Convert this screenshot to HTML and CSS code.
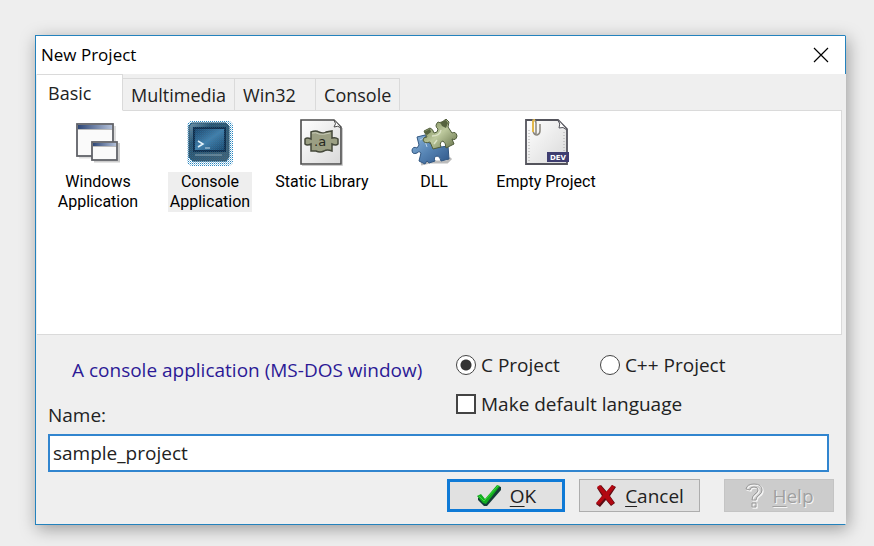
FILE: index.html
```html
<!DOCTYPE html>
<html lang="en">
<head>
    <meta charset="UTF-8">
    <meta name="viewport" content="width=device-width, initial-scale=1.0">
    <title>New Project</title>
    <link rel="stylesheet" href="styles.css">
</head>
<body>
    <form class="dialog">
        <div class="title-bar">
            <h1>New Project</h1>
            <button type="button" class="close" aria-label="Close">
                <svg width="16" height="16" viewBox="0 0 16 16"><path d="M1 1L15 15M15 1L1 15" stroke="#000" stroke-width="1.2"/></svg>
            </button>
        </div>

        <div class="tabs">
            <button type="button" class="tab active">Basic</button>
            <button type="button" class="tab">Multimedia</button>
            <button type="button" class="tab">Win32</button>
            <button type="button" class="tab">Console</button>
        </div>

        <div class="panel">
            <button type="button" class="item">
                <svg width="48" height="48" viewBox="0 0 48 48">
                    <defs>
                        <linearGradient id="bar"><stop offset="0" stop-color="#2d4677"/><stop offset="1" stop-color="#b3c0d8"/></linearGradient>
                        <linearGradient id="paper" x2="1" y2="1"><stop offset="0" stop-color="#fff"/><stop offset="1" stop-color="#d9d9d9"/></linearGradient>
                    </defs>
                    <path d="M5 38.5H41V7" fill="none" stroke="#ddd" stroke-width="2"/>
                    <rect x="3" y="5" width="36" height="32" fill="#fafafa" stroke="#606268" stroke-width="1.8"/>
                    <rect x="4" y="6" width="34" height="4" fill="url(#bar)"/>
                    <path d="M4 10.5H38" stroke="#bbb"/>
                    <path d="M20 42.5H45V24" fill="none" stroke="#ccc" stroke-width="2"/>
                    <rect x="18" y="23" width="25" height="18" fill="#fafafa" stroke="#606268" stroke-width="1.8"/>
                    <rect x="19" y="24" width="23" height="3" fill="url(#bar)"/>
                    <path d="M19 27.5H42" stroke="#bbb"/>
                </svg>
                <span>Windows Application</span>
            </button>
            <button type="button" class="item selected">
                <svg width="48" height="48" viewBox="0 0 48 48">
                    <defs>
                        <linearGradient id="chip" x2="1" y2="1"><stop offset="0" stop-color="#7895a8"/><stop offset=".3" stop-color="#2c526c"/><stop offset="1" stop-color="#456071"/></linearGradient>
                        <linearGradient id="screen" x2="1" y2="1"><stop offset="0" stop-color="#1d4367"/><stop offset=".5" stop-color="#467fa8"/><stop offset="1" stop-color="#1c4669"/></linearGradient>
                        <pattern id="dots" width="2" height="2" patternUnits="userSpaceOnUse"><rect width="1" height="1" fill="#2584bf"/><rect x="1" y="1" width="1" height="1" fill="#2584bf" opacity=".4"/></pattern>
                    </defs>
                    <rect x="1" y="2" width="46" height="45" rx="5" fill="url(#dots)"/>
                    <path d="M6 4H40L43 7V38L40 42H7L3 38V7Z" fill="url(#chip)" stroke="#34566d"/>
                    <rect x="7" y="8" width="33" height="25" fill="#122c48"/>
                    <rect x="9" y="10" width="29" height="21" fill="url(#screen)"/>
                    <rect x="2" y="3" width="43" height="41" rx="4" fill="url(#dots)" opacity=".35"/>
                    <path d="M12 22L17 25L12 28" fill="none" stroke="#e4f2fa" stroke-width="1.5"/>
                    <path d="M19 29H24" stroke="#c4d9e6"/>
                    <path d="M9 36H36" stroke="#8ba6b5"/>
                </svg>
                <span>Console Application</span>
            </button>
            <button type="button" class="item">
                <svg width="48" height="48" viewBox="0 0 48 48">
                    <path d="M4 46.5H44.5V9" fill="none" stroke="#ccc"/>
                    <path d="M3 1H36L43 8V45H3Z" fill="url(#paper)" stroke="#4c4c4c" stroke-width="1.6"/>
                    <path d="M36 1Q39 5 36 8Q40 6 43 9" fill="#fff" stroke="#4c4c4c"/>
                    <path d="M13 13Q18 11 21 13Q25 15 28 13L34 12V19Q38 18 40 20V25Q38 27 34 25V32Q29 30 26 32Q22 34 18 32H13V25Q9 27 7 25V20Q9 18 13 20Z" fill="#9b9f83" stroke="#45493b" stroke-width="1.5"/>
                    <path d="M14 14Q18 13 21 15Q25 16 32 14" fill="none" stroke="#c9ccba"/>
                    <text x="16" y="27" class="lib-mark">.a</text>
                </svg>
                <span>Static Library</span>
            </button>
            <button type="button" class="item">
                <svg width="48" height="48" viewBox="0 0 48 48">
                    <defs>
                        <linearGradient id="blue" x2="1" y2="1"><stop offset="0" stop-color="#8db6da"/><stop offset=".5" stop-color="#5583b3"/><stop offset="1" stop-color="#2f5688"/></linearGradient>
                        <linearGradient id="green" x2="1" y2="1"><stop offset="0" stop-color="#6a7948"/><stop offset=".5" stop-color="#bdc99d"/><stop offset="1" stop-color="#626e46"/></linearGradient>
                    </defs>
                    <path d="M11 45L20 43L37 43L41 39" fill="none" stroke="#bbb" stroke-width="3"/>
                    <path d="M7 18L15 16L19 24L31 28L38 27L39 40L31 42Q30 37 27 37Q23 38 25 42L19 44Q17 40 15 45L9 42L11 34Q9 31 7 34Q2 36 2 31Q3 27 7 29L9 26Z" fill="url(#blue)" stroke="#315681"/>
                    <path d="M10 21L14 19L17 28" fill="none" stroke="#b8d2e8"/>
                    <path d="M14 12L20 9Q23 10 24 14Q28 14 28 10Q24 7 28 3L31 4L36 0L39 3L38 8L42 14Q46 12 47 17Q46 22 42 20L44 25L36 29Q36 24 33 22Q29 23 31 28L23 30L20 23Q14 25 13 21Q13 18 17 18Z" fill="url(#green)" stroke="#505d3b"/>
                    <path d="M30 3L36 1L38 4L36 9L32 7ZM14 13L20 10L21 13L17 16Z" fill="#56633e"/>
                    <path d="M22 17Q30 17 31 11M24 25L27 21" fill="none" stroke="#dbe2c5" stroke-width="1.5"/>
                </svg>
                <span>DLL</span>
            </button>
            <button type="button" class="item">
                <svg width="48" height="48" viewBox="0 0 48 48">
                    <path d="M4 1H36L45 10V45H4Z" fill="url(#paper)" stroke="#54545c" stroke-width="1.8"/>
                    <path d="M36 1Q39 5 37 9Q41 7 45 11" fill="#fff" stroke="#54545c"/>
                    <path d="M7 11V44M42 13V32" stroke="#aaa" stroke-dasharray="1 2"/>
                    <path d="M14 15V4Q14 1 11 1V12Q12 16 15 16Q18 15 18 12V5" fill="none" stroke="#8a867d" stroke-width="1.5"/>
                    <path d="M11 13V3Q11 1 13 1" fill="none" stroke="#e2b84a" stroke-width="2"/>
                    <rect x="25" y="33" width="22" height="10" fill="#3e3d70"/>
                    <text x="28" y="41" class="dev-mark">DEV</text>
                </svg>
                <span>Empty Project</span>
            </button>
        </div>

        <div class="options">
            <div class="info">
                <p class="description">A console application (MS-DOS window)</p>
                <label for="projectName">Name:</label>
            </div>
            <div class="choices">
                <div class="languages">
                    <label><input type="radio" name="language" checked>C Project</label>
                    <label><input type="radio" name="language">C++ Project</label>
                </div>
                <label><input type="checkbox">Make default language</label>
            </div>
        </div>
        <div class="name-field">
            <input type="text" id="projectName" value="sample_project">
        </div>

        <div class="button-group">
            <button type="submit" class="btn ok">
                <svg width="26" height="24" viewBox="0 0 26 24">
                    <path d="M2 14L6 12L10 17L22 2L25 3V6L11 22H8L2 16Z" fill="#163c38"/>
                    <path d="M1 12L5 10L9 15L21 1L24 2L10 20L7 19Z" fill="#13ad20"/>
                    <path d="M3 12L8 17L22 2" fill="none" stroke="#3ddb3a"/>
                </svg>
                <span><u>O</u>K</span>
            </button>
            <button type="button" class="btn cancel">
                <svg width="22" height="24" viewBox="0 0 22 24">
                    <path d="M2 4L6 1L12 8L17 1L21 3L15 12L20 19L16 22L11 16L5 23L1 20L7 12Z" fill="#5c0c14"/>
                    <path d="M2 3L5 1L11 8L17 1L20 3L14 11L19 19L16 21L10 14L4 21L1 19L8 11Z" fill="#b30812"/>
                </svg>
                <span><u>C</u>ancel</span>
            </button>
            <button type="button" class="btn help" disabled>
                <svg width="20" height="28" viewBox="0 0 20 28">
                    <g fill="none" stroke-linejoin="round">
                        <path d="M3 8Q4 3 11 3Q19 3 19 9Q19 12 16 14Q13 16 13 19H9Q9 15 12 13Q15 11 15 9Q15 6 11 6Q7 6 7 9ZM9 22H13V26H9Z" stroke="#f5f5f5" stroke-width="1.5"/>
                        <path d="M2 7Q3 2 10 2Q18 2 18 8Q18 11 15 13Q12 15 12 18H8Q8 14 11 12Q14 10 14 8Q14 5 10 5Q6 5 6 8ZM8 21H12V25H8Z" stroke="#999"/>
                    </g>
                </svg>
                <span><u>H</u>elp</span>
            </button>
        </div>
    </form>
</body>
</html>
```

FILE: styles.css
```css
* {
    box-sizing: border-box;
}

body {
    margin: 0;
    padding: 35px 28px 21px 35px;
    background-color: #eee;
    font-family: "Open Sans", "Noto Sans", sans-serif;
    font-size: 19px;
    line-height: 26px;
    color: #222;
}

button, input {
    font: inherit;
    color: inherit;
}

h1, p {
    margin: 0;
}

.dialog {
    background-color: #efefef;
    border: 1px solid #2482bd;
    border-right-color: #efefef;
    box-shadow: 2px 4px 16px rgba(0, 0, 0, 0.35);
}

.title-bar {
    display: flex;
    justify-content: space-between;
    align-items: center;
    height: 38px;
    margin-right: -1px;
    padding: 0 16px 0 5px;
    background-color: #fff;
    border-right: 1px solid #2482bd;
}

.title-bar h1 {
    font-size: 17px;
    font-weight: normal;
    color: #000;
}

.close {
    display: flex;
    padding: 0;
    background: none;
    border: none;
}

/* tabs */
.tabs {
    display: flex;
    align-items: flex-end;
    padding-left: 1px;
}

.tab {
    position: relative;
    min-width: 81px;
    height: 33px;
    margin-bottom: -1px;
    padding: 0 8px;
    background-color: #f0f0f0;
    border: 1px solid #dadada;
    border-left: none;
    font-size: 18px;
    text-align: left;
}

.tab.active {
    min-width: 86px;
    height: 37px;
    padding-left: 11px;
    background-color: #fff;
    border-bottom-color: #fff;
}

.panel {
    display: flex;
    align-items: flex-start;
    height: 225px;
    margin: 0 3px 0 1px;
    padding: 8px 5px;
    background-color: #fff;
    border: 1px solid #dadada;
    border-left: none;
}

.item {
    display: flex;
    flex-direction: column;
    align-items: center;
    gap: 5px;
    width: 112px;
    padding: 0;
    background: none;
    border: none;
    font-family: Roboto, sans-serif;
    font-size: 16px;
    line-height: 20px;
    color: #000;
}

.item span {
    max-width: 84px;
}

.item:nth-child(n+3) span {
    max-width: none;
}

.item.selected span {
    background-color: #eee;
}

.lib-mark {
    font-family: "DejaVu Sans", sans-serif;
    font-size: 13px;
    fill: #262820;
}

.dev-mark {
    font-family: "DejaVu Sans", sans-serif;
    font-size: 7px;
    font-weight: bold;
    fill: #fff;
}

/* project options */
.options {
    display: grid;
    grid-template-columns: 408px 1fr;
    padding: 0 16px 0 12px;
}

.info {
    display: flex;
    flex-direction: column;
    gap: 19px;
    padding-top: 22px;
}

.description {
    padding-left: 24px;
    color: #2c1a96;
}

.choices {
    display: flex;
    flex-direction: column;
    gap: 13px;
    padding-top: 17px;
}

.languages {
    display: flex;
    gap: 40px;
}

.choices label {
    display: flex;
    align-items: center;
    gap: 5px;
}

.choices input {
    appearance: none;
    width: 20px;
    height: 20px;
    margin: 0;
    background-color: #fff;
    border: 2px solid #444;
}

.choices input[type="radio"] {
    border-width: 1px;
    border-radius: 50%;
}

.choices input[type="radio"]:checked {
    background-image: radial-gradient(circle, #333 5px, #fff 6px);
}

.choices input[type="checkbox"]:checked {
    background-color: #444;
}

.name-field {
    padding: 6px 16px 0 12px;
}

.name-field input {
    display: block;
    width: 100%;
    height: 38px;
    padding: 0 3px;
    background-color: #fff;
    border: 2px solid #3185cf;
    outline: none;
}

/* bottom buttons */
.button-group {
    display: flex;
    justify-content: flex-end;
    padding: 7px 11px 12px;
}

.btn {
    display: flex;
    justify-content: center;
    align-items: center;
    gap: 8px;
    height: 33px;
    padding: 0;
    background-color: #e1e1e1;
    border: 1px solid #adadad;
}

.btn u {
    text-underline-offset: 3px;
}

.ok {
    width: 118px;
    border: 3px solid #0f7ad6;
}

.cancel {
    width: 121px;
    margin-left: 14px;
}

.help {
    width: 110px;
    margin-left: 24px;
    background-color: #ccc;
    border-color: #c4c4c4;
    color: #a0a0a0;
    text-shadow: 1px 1px #f5f5f5;
}
```
